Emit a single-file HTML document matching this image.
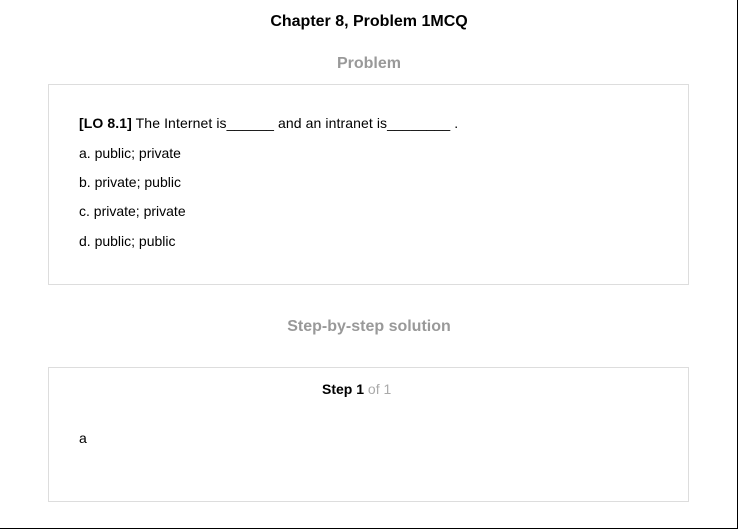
<!DOCTYPE html>
<html><head><style>
html,body{margin:0;padding:0;}
body{width:738px;height:529px;position:relative;background:#fff;font-family:"Liberation Sans",Arial,sans-serif;color:#000;overflow:hidden;}
.frame{position:absolute;left:0;top:0;width:737px;height:528px;border-right:1px solid #000;border-bottom:1px solid #000;}
.t{position:absolute;white-space:nowrap;line-height:1;}
.box{position:absolute;left:48px;width:640px;border:1px solid #ddd;box-sizing:border-box;}
</style></head><body>
<div class="frame"></div>
<div class="t" style="left:0;width:738px;text-align:center;top:14px;font-size:16px;font-weight:bold;">Chapter 8, Problem 1MCQ</div>
<div class="t" style="left:0;width:738px;text-align:center;top:56px;font-size:16px;font-weight:bold;color:#999;">Problem</div>
<div class="box" style="top:84px;height:201px;width:641px;"></div>
<div class="t" style="left:79px;top:116px;font-size:14px;letter-spacing:0.1px;"><b>[LO 8.1]</b> The Internet is______ and an intranet is________ .</div>
<div class="t" style="left:79px;top:146px;font-size:14px;">a. public; private</div>
<div class="t" style="left:79px;top:175px;font-size:14px;">b. private; public</div>
<div class="t" style="left:79px;top:204px;font-size:14px;">c. private; private</div>
<div class="t" style="left:79px;top:234px;font-size:14px;">d. public; public</div>
<div class="t" style="left:0;width:738px;text-align:center;top:319px;font-size:16px;font-weight:bold;color:#999;">Step-by-step solution</div>
<div class="box" style="top:367px;height:135px;width:641px;"></div>
<div class="t" style="left:322px;top:382px;font-size:14px;"><b>Step 1</b> <span style="color:#aaa">of 1</span></div>
<div class="t" style="left:79px;top:431px;font-size:14px;">a</div>
</body></html>
